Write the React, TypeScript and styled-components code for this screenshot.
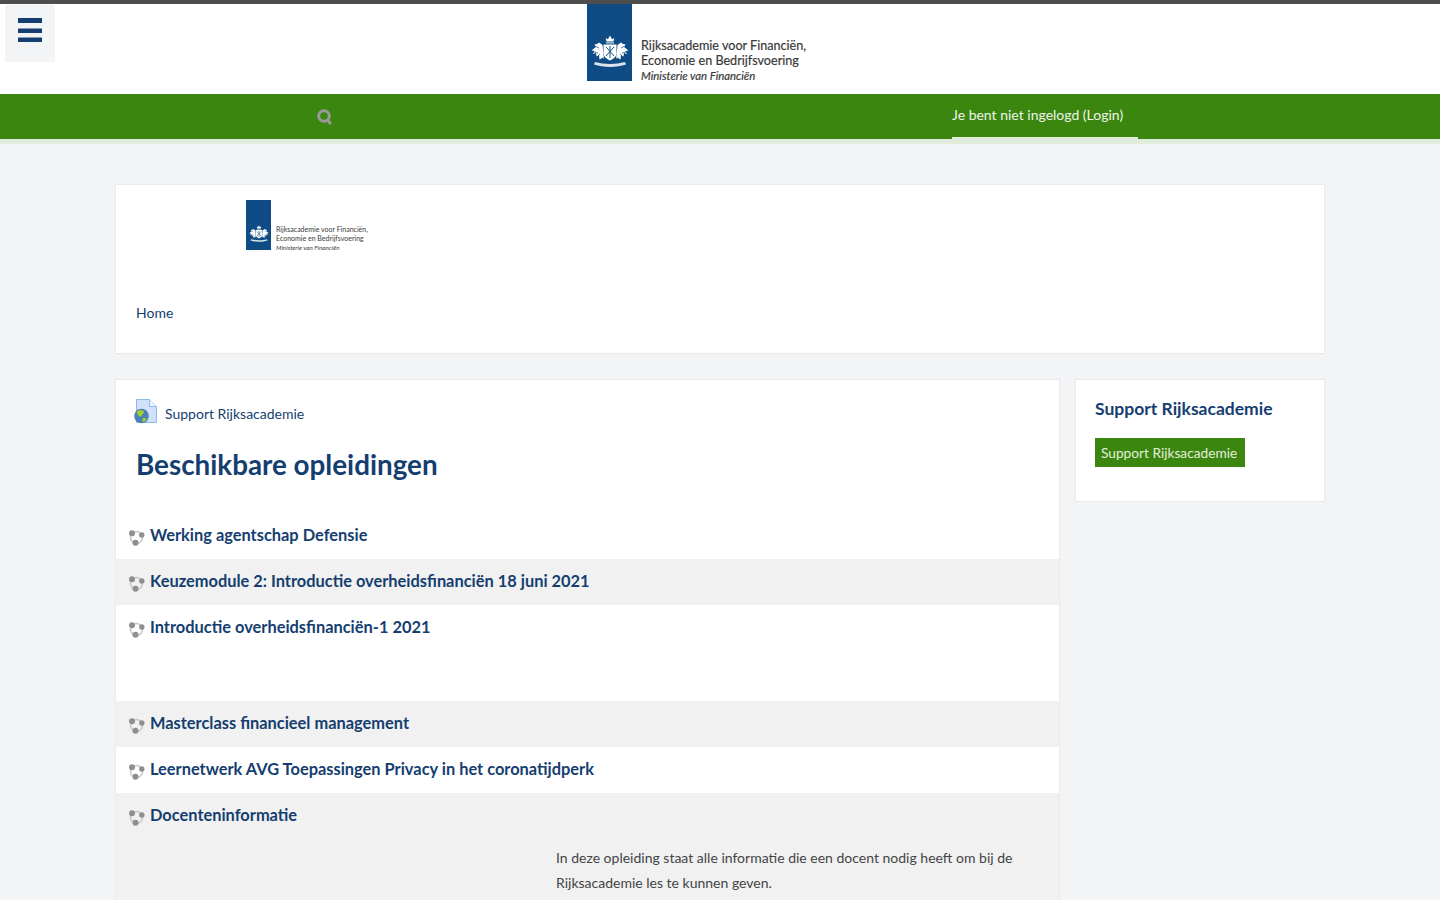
import React, { FunctionComponent } from "react";
import styled, { createGlobalStyle } from "styled-components";

const navy = "#153e70";
const green = "#3b860e";

const courses = [
  { name: "Werking agentschap Defensie", height: 46 },
  { name: "Keuzemodule 2: Introductie overheidsfinanciën 18 juni 2021", height: 46 },
  { name: "Introductie overheidsfinanciën-1 2021", height: 96 },
  { name: "Masterclass financieel management", height: 46 },
  { name: "Leernetwerk AVG Toepassingen Privacy in het coronatijdperk", height: 46 },
];

const Crest: FunctionComponent<{ width: number }> = ({ width }) => (
  <svg width={width} height={(width * 33) / 38} viewBox="0 0 38 33" fill="#fff">
    {/* crown */}
    <path d="M15.500 6.500l-.8-3.500 2.200 1.300L19 .5l2.100 3.800L23.300 3l-.8 3.500z" />
    <rect x="15" y="7.300" width="8" height="1.200" opacity=".8" />
    {/* shield */}
    <path d="M12.500 9.500h13v9c0 3.500-3.500 5.500-6.500 7-3-1.500-6.500-3.500-6.500-7z" />
    <path d="M15 12l8 9M23 12l-8 9M19 11v12" stroke="#0f4c85" strokeWidth="1" />
    {/* lions */}
    <path d="M11.500 10L8 7.500 6 9 3.500 9.500 5 12 .5 15.500l3 .5-1.500 3 3-1 .5 3.500 2.500-1.500.5 4.500 3.500-2 1 1.500z" />
    <path d="M26.500 10L30 7.500 32 9l2.500.5L33 12l4.500 3.500-3 .5 1.500 3-3-1-.5 3.500-2.500-1.500-.5 4.500-3.500-2-1 1.500z" />
    <path d="M5 11.500l3 1.500M33 11.500L30 13M3 17l4 1M35 17l-4 1M7 21l2-2M31 21l-2-2" stroke="#0f4c85" strokeWidth=".7" />
    {/* motto */}
    <path d="M4 27c5 1 9 2 15 2s10-1 15-2l1 2.500c-5 1.500-10 2.500-16 2.500S8 31 3 29.500z" opacity=".85" />
  </svg>
);

const SearchIcon = () => (
  <svg width="15" height="16" viewBox="0 0 15 16" fill="none" stroke="#999">
    <circle cx="7" cy="7" r="5.300" strokeWidth="3" />
    <path d="M10.500 11l3.300 4" strokeWidth="3" />
  </svg>
);

const GlobeDoc = () => (
  <svg width="23" height="25" viewBox="0 0 23 25">
    <path d="M2.500.5h13l7 7v16H2.500z" fill="#cfe2f9" stroke="#90b8ea" />
    <path d="M15.500.5v7h7" fill="#eef5fe" stroke="#90b8ea" />
    <circle cx="7.500" cy="17" r="7.300" fill="#4b80b8" />
    <path d="M3 12.500c2-1.800 5.500-1.800 7 0 .3 2-2 2.500-2.500 4.500-1 1.500-3 .5-3.200-1-1-1-1.800-2.500-1.300-3.500zM8.500 19.500c1.500-1 3.500-.5 4 .5-.5 1.500-2.200 3-3.400 3-.5-1-1-2.500-.6-3.500z" fill="#a4d02c" />
  </svg>
);

const CourseIcon = () => (
  <svg width="17" height="17" viewBox="0 0 17 17">
    <circle cx="8.500" cy="8.500" r="6" fill="none" stroke="#c9c9c9" strokeWidth="1.600" />
    <circle cx="4" cy="4.200" r="3" fill="#8f8f8f" />
    <circle cx="13.800" cy="6" r="2.700" fill="#8f8f8f" />
    <circle cx="7.500" cy="13.800" r="3" fill="#8f8f8f" />
  </svg>
);

const App: FunctionComponent = () => (
  <Page>
    <GlobalStyle />
    <Header>
      <MenuButton aria-label="Menu">
        <svg width="24" height="24" viewBox="0 0 24 24" fill={navy}>
          <rect y="0" width="24" height="5" />
          <rect y="10.500" width="24" height="4.500" />
          <rect y="19.500" width="24" height="4.500" />
        </svg>
      </MenuButton>
      <HeaderLogo>
        <LogoBlock $width={45} $height={77} $crestTop={31}>
          <Crest width={38} />
        </LogoBlock>
        <LogoText $size={12.600} $lineHeight={15} $pad={34}>
          <span>Rijksacademie voor Financiën,</span>
          <span>Economie en Bedrijfsvoering</span>
          <em>Ministerie van Financiën</em>
        </LogoText>
      </HeaderLogo>
    </Header>
    <NavBar>
      <SearchSlot>
        <SearchIcon />
      </SearchSlot>
      <LoginLink>Je bent niet ingelogd (Login)</LoginLink>
    </NavBar>
    <Content>
      <TopCard>
        <TopLogo>
          <LogoBlock $width={25} $height={50} $crestTop={25}>
            <Crest width={20} />
          </LogoBlock>
          <LogoText $size={7} $lineHeight={9} $pad={25}>
            <span>Rijksacademie voor Financiën,</span>
            <span>Economie en Bedrijfsvoering</span>
            <em>Ministerie van Financiën</em>
          </LogoText>
        </TopLogo>
        <Crumb>Home</Crumb>
      </TopCard>
      <Columns>
        <MainCard>
          <SupportLink>
            <GlobeDoc />
            <SupportLabel>Support Rijksacademie</SupportLabel>
          </SupportLink>
          <Title>Beschikbare opleidingen</Title>
          <CourseList>
            {courses.map((course, i) => (
              <CourseRow key={course.name} $height={course.height} $striped={i % 2 === 1}>
                <CourseIcon />
                <CourseName>{course.name}</CourseName>
              </CourseRow>
            ))}
            <CourseRow $height={130} $striped>
              <CourseIcon />
              <CourseName>Docenteninformatie</CourseName>
              <Summary>
                In deze opleiding staat alle informatie die een docent nodig heeft om bij de Rijksacademie les te kunnen geven.
              </Summary>
            </CourseRow>
          </CourseList>
        </MainCard>
        <SideCard>
          <SideTitle>Support Rijksacademie</SideTitle>
          <SideButton>Support Rijksacademie</SideButton>
        </SideCard>
      </Columns>
    </Content>
  </Page>
);

const GlobalStyle = createGlobalStyle`
  html, body {
    margin: 0;
    padding: 0;
    background: #f3f4f6;
    overflow: hidden;
    font-family: Lato, "Open Sans", sans-serif;
  }
`;

const Page = styled.div`
  height: 900px;
  overflow: hidden;
`;

const Header = styled.header`
  position: relative;
  height: 90px;
  box-sizing: content-box;
  background: #fff;
  border-top: 4px solid #4d4d4d;
  padding-right: 45px;
  display: flex;
  justify-content: center;
`;

const MenuButton = styled.div`
  position: absolute;
  left: 5px;
  top: 1px;
  width: 50px;
  height: 57px;
  box-sizing: border-box;
  padding: 13px 13px 0;
  background: #f3f4f6;
`;

const HeaderLogo = styled.div`
  display: flex;
  width: 221px;
`;

const LogoBlock = styled.div<{ $width: number; $height: number; $crestTop: number }>`
  width: ${(p) => p.$width}px;
  height: ${(p) => p.$height}px;
  box-sizing: border-box;
  padding-top: ${(p) => p.$crestTop}px;
  background: #0f4c85;
  display: flex;
  justify-content: center;
  align-items: flex-start;
  flex-shrink: 0;
`;

const LogoText = styled.div<{ $size: number; $lineHeight: number; $pad: number }>`
  display: flex;
  flex-direction: column;
  padding-top: ${(p) => p.$pad}px;
  margin-left: ${(p) => p.$size * 0.72}px;
  font-size: ${(p) => p.$size}px;
  line-height: ${(p) => p.$lineHeight}px;
  color: #3a3a3a;
  white-space: nowrap;
  -webkit-text-stroke: ${(p) => (p.$size > 10 ? 0.2 : 0)}px #3a3a3a;

  em {
    font-size: 0.9em;
  }
`;

const NavBar = styled.nav`
  height: 45px;
  background: ${green};
  border-bottom: 5px solid #e1ecdc;
  display: flex;
`;

const SearchSlot = styled.div`
  width: 332px;
  padding-top: 15px;
  box-sizing: border-box;
  display: flex;
  justify-content: flex-end;
  align-items: flex-start;
`;

const LoginLink = styled.a`
  margin-left: 620px;
  width: 186px;
  height: 45px;
  box-sizing: border-box;
  border-bottom: 2px solid #e1ecdc;
  padding-top: 11px;
  font-size: 14px;
  line-height: 20px;
  color: #eef5ea;
`;

const Content = styled.main`
  width: 1210px;
  margin: 40px 0 0 115px;
`;

const Card = styled.section`
  background: #fff;
  border: 1px solid #e9eaec;
  box-sizing: border-box;
`;

const TopCard = styled(Card)`
  height: 170px;
  padding: 15px 20px 0;
`;

const TopLogo = styled.div`
  display: flex;
  height: 50px;
  margin-left: 110px;
`;

const Crumb = styled.a`
  display: block;
  margin-top: 52px;
  font-size: 14px;
  line-height: 22px;
  color: ${navy};
`;

const Columns = styled.div`
  display: grid;
  grid-template-columns: 945px 250px;
  gap: 15px;
  margin-top: 25px;
  align-items: start;
`;

const MainCard = styled(Card)`
  padding-top: 19px;
`;

const SupportLink = styled.a`
  display: flex;
  align-items: flex-start;
  gap: 8px;
  margin-left: 18px;
  height: 25px;
  color: ${navy};
`;

const SupportLabel = styled.span`
  margin-top: 5px;
  font-size: 14px;
  line-height: 20px;
`;

const Title = styled.h2`
  margin: 22px 0 29px 20px;
  font-size: 27.800px;
  line-height: 38px;
  font-weight: 700;
  color: ${navy};
`;

const CourseList = styled.div`
  display: flex;
  flex-direction: column;
`;

const CourseRow = styled.div<{ $height: number; $striped: boolean }>`
  position: relative;
  height: ${(p) => p.$height}px;
  box-sizing: border-box;
  padding: 10px 0 0 12px;
  display: flex;
  align-items: flex-start;
  gap: 5px;
  background: ${(p) => (p.$striped ? "#f1f1f1" : "#fff")};

  svg {
    margin-top: 6px;
    flex-shrink: 0;
  }
`;

const CourseName = styled.a`
  font-size: 16.400px;
  line-height: 24px;
  font-weight: 700;
  color: ${navy};
`;

const Summary = styled.p`
  position: absolute;
  left: 440px;
  top: 52px;
  width: 480px;
  margin: 0;
  font-size: 14px;
  line-height: 25px;
  color: #444;
`;

const SideCard = styled(Card)`
  height: 123px;
  padding: 17px 19px 0;
`;

const SideTitle = styled.h3`
  margin: 0 0 17px;
  font-size: 17.500px;
  line-height: 24px;
  font-weight: 700;
  color: ${navy};
`;

const SideButton = styled.a`
  display: block;
  height: 29px;
  width: 150px;
  box-sizing: border-box;
  padding-left: 6px;
  background: ${green};
  font-size: 13.700px;
  line-height: 29px;
  color: #e4efdd;
  white-space: nowrap;
`;

export default App;
